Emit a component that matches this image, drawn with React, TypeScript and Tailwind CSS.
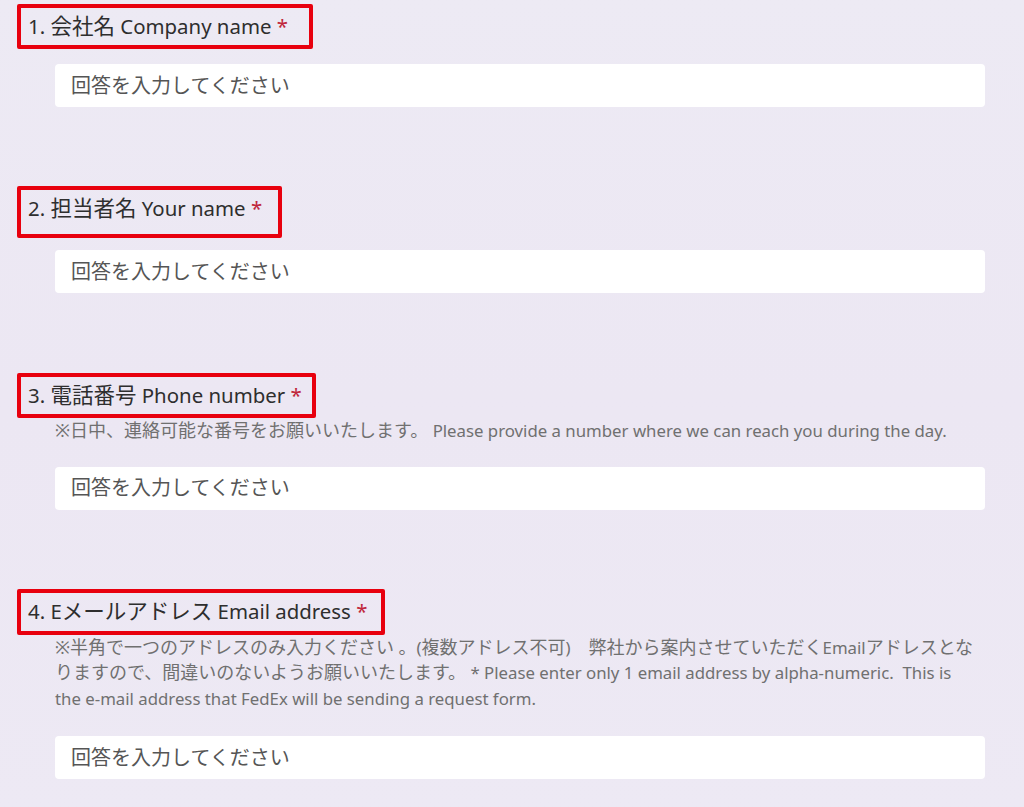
const JP = '"Noto Sans", "Noto Sans CJK JP", sans-serif';

type Question = {
  no: number;
  title: string;
  help?: string[];
  boxClass: string;
  gapClass: string;
};

// the red boxes are drawn by hand in the original, so each one has its own size
const questions: Question[] = [
  { no: 1, title: "会社名 Company name", boxClass: "mt-[4px] h-[45px] w-[296px]", gapClass: "mt-[15px]" },
  { no: 2, title: "担当者名 Your name", boxClass: "mt-[79px] h-[52px] w-[265px]", gapClass: "mt-[12px]" },
  {
    no: 3,
    title: "電話番号 Phone number",
    help: ["※日中、連絡可能な番号をお願いいたします。 Please provide a number where we can reach you during the day."],
    boxClass: "mt-[80px] h-[45px] w-[299px]",
    gapClass: "mt-[23px]",
  },
  {
    no: 4,
    title: "Eメールアドレス Email address",
    help: [
      "※半角で一つのアドレスのみ入力ください 。(複数アドレス不可)　弊社から案内させていただくEmailアドレスとな",
      "りますので、間違いのないようお願いいたします。 * Please enter only 1 email address by alpha-numeric.  This is",
      "the e-mail address that FedEx will be sending a request form.",
    ],
    boxClass: "mt-[79px] h-[46px] w-[368px]",
    gapClass: "mt-[25px]",
  },
];

// japanese runs come out a little wider in the original font, so bump them
const CJK = /([\u3000-\u30ff\u4e00-\u9fff\uff00-\uffef※]+)/;

function Mixed({ text, jpClass }: { text: string; jpClass: string }) {
  return (
    <>
      {text.split(CJK).map((part, i) =>
        CJK.test(part) ? (
          <span key={i} className={jpClass}>
            {part}
          </span>
        ) : (
          part
        )
      )}
    </>
  );
}

export default function App() {
  return (
    <div
      className="min-h-screen w-full bg-gradient-to-b from-[#edeaf4] via-[#ece7f3] to-[#ede9f4]"
      style={{ fontFamily: JP }}
    >
      <div className="flex flex-col pb-[27px]">
        {questions.map((q) => (
          <div key={q.no} className="flex flex-col">
            {/* question title, highlighted with a red box */}
            <div
              className={`self-start ml-[17px] border-4 border-[#e8000e] rounded-[2px] pl-[7px] pt-[3px] whitespace-nowrap ${q.boxClass}`}
            >
              <span className="text-[20.4px] leading-[29px] text-[#2e2e2e]">
                {q.no}. <Mixed text={q.title} jpClass="text-[21.5px] leading-[29px]" />{" "}
                <span className="text-[#c0273c]">*</span>
              </span>
            </div>
            {q.help && (
              <div className="ml-[55px] flex flex-col text-[16.8px] leading-[25.5px] text-[#707070]">
                {q.help.map((line, i) => (
                  <p key={i} className="whitespace-pre">
                    <Mixed text={line} jpClass="text-[18px] leading-[25.5px]" />
                  </p>
                ))}
              </div>
            )}
            <div
              className={`ml-[55px] w-[930px] h-[43px] rounded-[4px] bg-white flex items-center px-[16px] ${q.gapClass}`}
            >
              <span className="text-[20px] text-[#555555]">回答を入力してください</span>
            </div>
          </div>
        ))}
      </div>
    </div>
  );
}
